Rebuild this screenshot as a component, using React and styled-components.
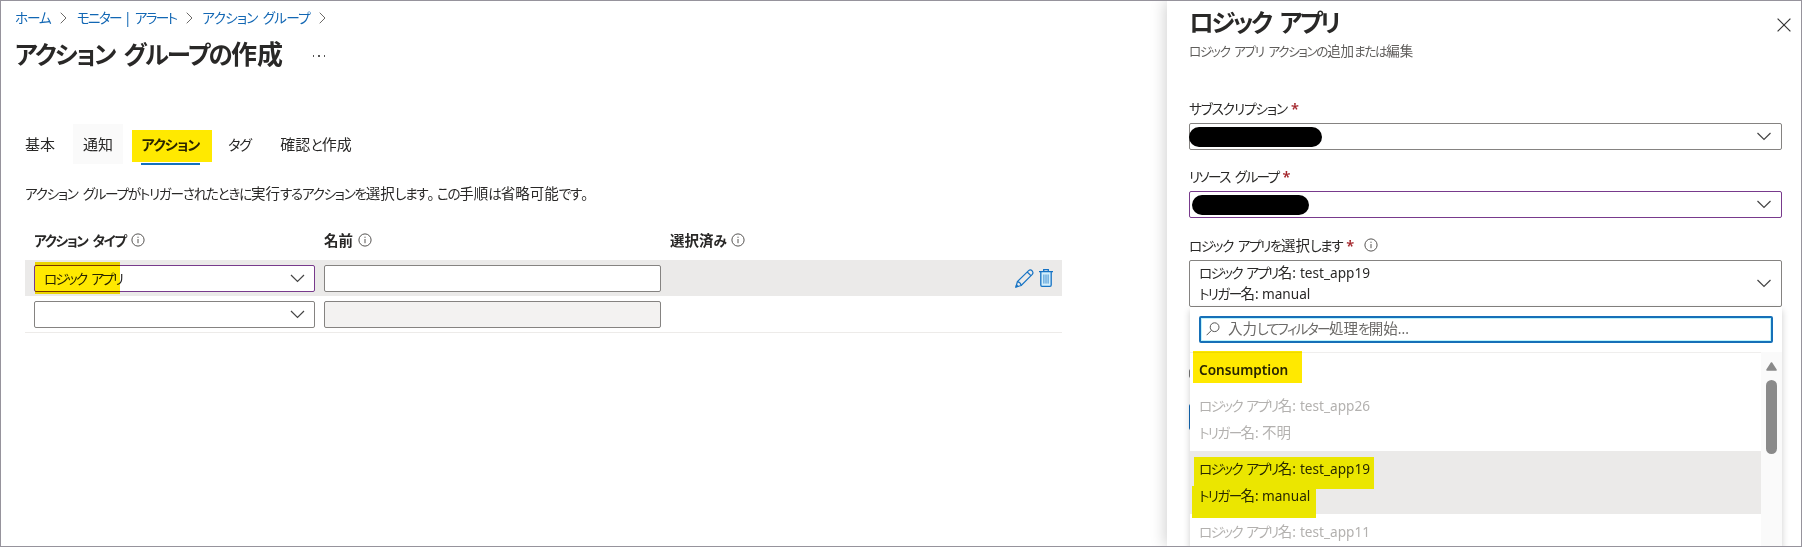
import React from 'react';
import styled, { createGlobalStyle, css } from 'styled-components';

const GlobalStyle = createGlobalStyle`
  *, *::before, *::after { box-sizing: border-box; }
  body {
    margin: 0;
    overflow: hidden;
    background: #fff;
    color: #292827;
    font-family: "Noto Sans", "Noto Sans CJK JP", sans-serif;
    font-size: 14.5px;
  }
`;

/* ---------- text ---------- */

const Run = styled.span`
  display: inline-block;
  white-space: pre;
  font-size: ${(p) => p.$size || 14.5}px;
  font-weight: ${(p) => p.$weight || 400};
  color: ${(p) => p.$color || 'inherit'};
  font-family: "Noto Sans CJK JP", sans-serif;
  font-feature-settings: "palt";
  line-height: ${(p) => p.$line || 20}px;
  word-spacing: ${(p) => p.$word ?? 0.12}em;
`;
const Kana = styled.span`
  font-size: 0.94em;
  letter-spacing: ${(p) => p.$track}em;
`;
const Stop = styled.span`
  letter-spacing: 0.16em;
`;
const Latin = styled.span`
  font-family: "Noto Sans", sans-serif;
  font-size: 0.94em;
`;

/* Sets kana tighter than kanji, and Latin in its own face. */
function Ja({ children, track = -0.08, ...rest }) {
  const parts = String(children).split(/([\u3040-\u30ff]+|。|[A-Za-z_0-9:.|]+)/);
  return (
    <Run {...rest}>
      {parts.map((part, i) => {
        if (part === '。') return <Stop key={i}>{part}</Stop>;
        if (/^[\u3040-\u30ff]/.test(part)) return <Kana key={i} $track={track}>{part}</Kana>;
        if (/^[A-Za-z_0-9:.|]/.test(part)) return <Latin key={i}>{part}</Latin>;
        return part;
      })}
    </Run>
  );
}

const Star = styled.span`
  font-family: "Noto Sans", sans-serif;
  font-size: 14.5px;
  font-weight: 600;
  line-height: 20px;
  color: #a4262c;
  margin: 0 ${(p) => p.$after || 0}px 0 4px;
`;

const Highlighted = styled.span`
  position: relative;
  display: inline-flex;
`;
const Marker = styled.span`
  position: absolute;
  left: ${(p) => p.$x}px;
  top: ${(p) => p.$y}px;
  width: ${(p) => p.$w}px;
  height: ${(p) => p.$h}px;
  background: ${(p) => p.$c || '#ffe900'};
  mix-blend-mode: ${(p) => (p.$c ? 'darken' : 'multiply')};
  pointer-events: none;
`;

/* ---------- icons ---------- */

const Svg = styled.svg`
  display: block;
  flex: none;
  fill: none;
`;
const CrumbArrow = () => (
  <Svg width="7" height="12" viewBox="0 0 7 12" stroke="#6b6967" strokeWidth="1">
    <path d="M0.7 0.7 L6 6 L0.7 11.3" />
  </Svg>
);
const Chevron = ({ size = 14 }) => (
  <Svg width={size} height="9" viewBox="0 0 14 9" stroke="#444" strokeWidth="1.2">
    <path d="M0.5 1 L7 7.5 L13.5 1" />
  </Svg>
);
const Info = () => (
  <Svg width="14" height="14" viewBox="0 0 14 14" stroke="#565452" strokeWidth="1">
    <circle cx="7" cy="7" r="6.1" />
    <path d="M7 6 V10.2 M7 3.7 V4.9" />
  </Svg>
);
const Close = () => (
  <Svg width="14" height="14" viewBox="0 0 14 14" stroke="#333" strokeWidth="1.2">
    <path d="M0.6 0.6 L13.4 13.4 M13.4 0.6 L0.6 13.4" />
  </Svg>
);
const Search = () => (
  <Svg width="14" height="14" viewBox="0 0 14 14" stroke="#555" strokeWidth="1">
    <circle cx="8.6" cy="5.2" r="4.4" />
    <path d="M5.4 8.4 L0.6 13.2" />
  </Svg>
);
const Pencil = () => (
  <Svg width="19" height="19" viewBox="0 0 19 19" stroke="#1673c4" strokeWidth="1.2">
    <path d="M1 18 L2.4 12.6 L13.6 1.6 Q15.4 0.2 17.1 1.8 Q18.7 3.6 17.3 5.3 L6.2 16.5 Z" />
    <path d="M12.2 3 L15.9 6.7 M2.4 12.6 Q5.6 13.2 6.2 16.5" />
    <path d="M1 18 L1.5 16 L3 17.5 Z" fill="#1673c4" />
  </Svg>
);
const Trash = () => (
  <Svg width="14" height="18" viewBox="0 0 14 18" stroke="#1673c4" strokeWidth="1.3">
    <path d="M1.8 3 V16 Q1.8 17.3 3 17.3 H11 Q12.2 17.3 12.2 16 V3" fill="#d3effc" />
    <path d="M0 2.7 H14 M4.7 2.4 V0.7 H9.3 V2.4" />
    <path d="M4.9 5.5 V14.6 M7 5.5 V14.6 M9.1 5.5 V14.6" strokeWidth="0.8" />
  </Svg>
);

/* ---------- page ---------- */

const Frame = styled.div`
  display: flex;
  width: 1802px;
  height: 547px;
  overflow: hidden;
  border: 1px solid #96939c;
  background: #fff;
`;
const Main = styled.main`
  width: 1166px;
  flex: none;
`;
const Crumbs = styled.nav`
  display: flex;
  align-items: center;
  height: 20px;
  margin: 6px 0 0 14px;
  color: #1267b4;
`;
const CrumbGap = styled.span`
  width: 26px;
  display: flex;
  justify-content: center;
  padding-top: 1px;
`;
const TitleRow = styled.div`
  display: flex;
  align-items: center;
  height: 36px;
  margin: 8px 0 0 14px;
`;
const More = styled.span`
  display: flex;
  gap: 4px;
  margin: 6px 0 0 30px;
  i { width: 1.5px; height: 1.5px; background: #555; }
`;
const Tabs = styled.div`
  display: flex;
  align-items: flex-start;
  height: 42px;
  margin: 53px 0 0 23px;
`;
const Tab = styled.div`
  display: flex;
  justify-content: center;
  width: ${(p) => p.$w}px;
  height: 40px;
  padding-top: 10px;
  margin-right: ${(p) => p.$gap || 0}px;
  background: ${(p) => (p.$hover ? '#fafafa' : 'transparent')};
  ${(p) => p.$active && css`
    height: 41px;
    border-bottom: 2px solid #1470bd;
  `}
`;
const Description = styled.div`
  height: 20px;
  margin: 17px 0 0 24px;
`;
const Table = styled.div`
  width: 1037px;
  margin: 27px 0 0 24px;
  border-bottom: 1px solid #edebe9;
`;
const Columns = styled.div`
  display: grid;
  grid-template-columns: 281px 337px 1fr auto;
  column-gap: 9px;
  align-items: center;
  padding: 0 9px;
`;
const HeadRow = styled(Columns)`
  height: 30px;
  padding-bottom: 10px;
`;
const HeadCell = styled.div`
  display: flex;
  align-items: center;
  gap: 5px;
`;
const BodyRow = styled(Columns)`
  height: 36px;
  background: ${(p) => (p.$selected ? '#ebeae9' : '#fff')};
`;
const Actions = styled.div`
  display: flex;
  align-items: center;
  gap: 5px;
`;
const Field = styled.div`
  display: flex;
  align-items: center;
  justify-content: space-between;
  height: ${(p) => p.$h || 27}px;
  padding: 0 ${(p) => p.$right || 9}px 0 9px;
  border: 1px solid ${(p) => (p.$changed ? '#783a8c' : '#858381')};
  border-radius: 2px;
  background: ${(p) => (p.$disabled ? '#f3f2f1' : '#fff')};
`;

/* ---------- side panel ---------- */

const Panel = styled.aside`
  position: relative;
  flex: 1;
  background: #fff;
  padding: 2px 19px 0 22px;
  box-shadow: -2px 0 14px rgba(0, 0, 0, 0.18);
`;
const PanelHead = styled.header`
  display: flex;
  justify-content: space-between;
  margin-right: -9px;
  height: 92px;
`;
const PanelTitle = styled.div`
  display: flex;
  flex-direction: column;
  align-items: flex-start;
`;
const CloseBox = styled.div`
  padding-top: 15px;
`;
const Group = styled.section`
  height: ${(p) => p.$h || 68}px;
`;
const GroupLabel = styled.div`
  display: flex;
  align-items: center;
  height: 28px;
  padding-bottom: 2px;
`;
const Redaction = styled.span`
  width: ${(p) => p.$w}px;
  height: 20px;
  margin-left: ${(p) => p.$offset}px;
  border-radius: 10px;
  background: #000;
`;
const Lines = styled.div`
  display: flex;
  flex-direction: column;
  align-items: flex-start;
  padding-bottom: 1px;
`;
const BehindMenu = styled.div`
  position: relative;
  height: 240px;
`;
const Sliver = styled.span`
  position: absolute;
  left: 0;
  top: ${(p) => p.$y}px;
  width: 4px;
  height: ${(p) => p.$h}px;
  border-radius: 2px;
  background: ${(p) => p.$c};
`;
const Menu = styled.div`
  position: absolute;
  left: 1px;
  right: 0;
  top: 0;
  bottom: 0;
  background: #fff;
  box-shadow: 0 3px 7px rgba(0, 0, 0, 0.2);
  padding-top: 9px;
`;
const SearchBox = styled.div`
  display: flex;
  align-items: center;
  gap: 8px;
  height: 27px;
  margin: 0 9px;
  padding: 0 0 2px 5px;
  border: 2px solid #1670b8;
  border-radius: 2px;
  box-shadow: inset 0 0 0 1px #bdf3fb;
`;
const MenuBody = styled.div`
  display: flex;
  height: 200px;
  margin-top: 9px;
`;
const List = styled.div`
  flex: 1;
  border-top: 1px solid #efeeed;
`;
const ListHeader = styled.div`
  height: 35px;
  padding: 6px 0 0 9px;
`;
const Item = styled.div`
  display: flex;
  flex-direction: column;
  align-items: flex-start;
  height: 63px;
  padding: 2.5px 0 0 9px;
  background: ${(p) => (p.$selected ? '#ebeae9' : 'transparent')};
  color: ${(p) => (p.$selected ? '#292827' : '#b3b1af')};
`;
const Scroll = styled.div`
  display: flex;
  flex-direction: column;
  align-items: center;
  width: 21px;
  padding-top: 10px;
  background: #fafafa;
`;
const ScrollThumb = styled.div`
  width: 11px;
  height: 74px;
  margin-top: 9px;
  border-radius: 6px;
  background: #8a8a8a;
`;

const AppName = ({ children, line }) => <Ja $line={line} $word={0.06} track={-0.12}>{`ロジック アプリ名: ${children}`}</Ja>;
const TriggerName = ({ children, line }) => <Ja $line={line} $word={0} track={-0.12}>{`トリガー名: ${children}`}</Ja>;

export default function App() {
  return (
    <>
      <GlobalStyle />
      <Frame>
        <Main>
          <Crumbs>
            <Ja>ホーム</Ja>
            <CrumbGap><CrumbArrow /></CrumbGap>
            <Ja $word={0} track={-0.125}>モニター | アラート</Ja>
            <CrumbGap><CrumbArrow /></CrumbGap>
            <Ja track={-0.055}>アクション グループ</Ja>
            <CrumbGap><CrumbArrow /></CrumbGap>
          </Crumbs>
          <TitleRow>
            <Ja $size={26} $weight={600} $line={36} track={-0.07}>アクション グループの作成</Ja>
            <More><i /><i /><i /></More>
          </TitleRow>
          <Tabs>
            <Tab $w={32} $gap={17}><Ja $size={15}>基本</Ja></Tab>
            <Tab $w={50} $gap={18} $hover><Ja $size={15}>通知</Ja></Tab>
            <Tab $w={59} $gap={27} $active>
              <Highlighted>
                <Ja $size={15} $weight={600} track={-0.063}>アクション</Ja>
                <Marker $x={-10} $y={-4} $w={80} $h={32} />
              </Highlighted>
            </Tab>
            <Tab $w={25} $gap={27}><Ja $size={15}>タグ</Ja></Tab>
            <Tab $w={74}><Ja $size={15}>確認と作成</Ja></Tab>
          </Tabs>
          <Description>
            <Ja track={-0.094}>アクション グループがトリガーされたときに実行するアクションを選択します。この手順は省略可能です。</Ja>
          </Description>
          <Table>
            <HeadRow>
              <HeadCell><Ja $weight={600} track={-0.1}>アクション タイプ</Ja><Info /></HeadCell>
              <HeadCell><Ja $weight={600}>名前</Ja><Info /></HeadCell>
              <HeadCell><Ja $weight={600}>選択済み</Ja><Info /></HeadCell>
            </HeadRow>
            <BodyRow $selected>
              <Field $changed>
                <Highlighted>
                  <Ja track={-0.135}>ロジック アプリ</Ja>
                  <Marker $x={-9} $y={-6} $w={85} $h={32} />
                </Highlighted>
                <Chevron size={15} />
              </Field>
              <Field />
              <span />
              <Actions><Pencil /><Trash /></Actions>
            </BodyRow>
            <BodyRow>
              <Field><span /><Chevron size={15} /></Field>
              <Field $disabled />
            </BodyRow>
          </Table>
        </Main>

        <Panel>
          <PanelHead>
            <PanelTitle>
              <Ja $size={26} $weight={600} $line={36} track={-0.1}>ロジック アプリ</Ja>
              <Ja $size={13.5} $color="#5f5d5b" track={-0.112}>ロジック アプリ アクションの追加または編集</Ja>
            </PanelTitle>
            <CloseBox><Close /></CloseBox>
          </PanelHead>
          <Group>
            <GroupLabel><Ja>サブスクリプション</Ja><Star>*</Star></GroupLabel>
            <Field $right={10}><Redaction $w={133} $offset={-10} /><Chevron /></Field>
          </Group>
          <Group $h={69}>
            <GroupLabel><Ja track={-0.12}>リソース グループ</Ja><Star>*</Star></GroupLabel>
            <Field $changed $right={10}><Redaction $w={117} $offset={-7} /><Chevron /></Field>
          </Group>
          <Group $h={75}>
            <GroupLabel><Ja track={-0.105}>ロジック アプリを選択します</Ja><Star $after={10}>*</Star><Info /></GroupLabel>
            <Field $h={47} $right={10}>
              <Lines>
                <AppName>test_app19</AppName>
                <TriggerName>manual</TriggerName>
              </Lines>
              <Chevron />
            </Field>
          </Group>
          <BehindMenu>
            <Sliver $y={62} $h={9} $c="#777" />
            <Sliver $y={97} $h={26} $c="#1267b4" />
            <Menu>
              <SearchBox><Search /><Ja $color="#6b6967" track={-0.12}>入力してフィルター処理を開始...</Ja></SearchBox>
              <MenuBody>
                <List>
                  <ListHeader>
                    <Highlighted>
                      <Ja $weight={600}>Consumption</Ja>
                      <Marker $x={-6} $y={-8} $w={109} $h={32} />
                    </Highlighted>
                  </ListHeader>
                  <Item>
                    <AppName line={27}>test_app26</AppName>
                    <TriggerName line={25}>不明</TriggerName>
                  </Item>
                  <Item $selected>
                    <Highlighted>
                      <AppName line={27}>test_app19</AppName>
                      <Marker $x={-5} $y={3.5} $w={180} $h={32} $c="#ece600" />
                    </Highlighted>
                    <Highlighted>
                      <TriggerName line={25}>manual</TriggerName>
                      <Marker $x={-7} $y={4.5} $w={124} $h={32} $c="#ece600" />
                    </Highlighted>
                  </Item>
                  <Item>
                    <AppName line={27}>test_app11</AppName>
                  </Item>
                </List>
                <Scroll>
                  <Svg width="11" height="9" viewBox="0 0 11 9">
                    <path d="M5.5 1 L10 8 H1 Z" fill="#8a8a8a" stroke="#8a8a8a" strokeWidth="1.6" strokeLinejoin="round" />
                  </Svg>
                  <ScrollThumb />
                </Scroll>
              </MenuBody>
            </Menu>
          </BehindMenu>
        </Panel>
      </Frame>
    </>
  );
}
